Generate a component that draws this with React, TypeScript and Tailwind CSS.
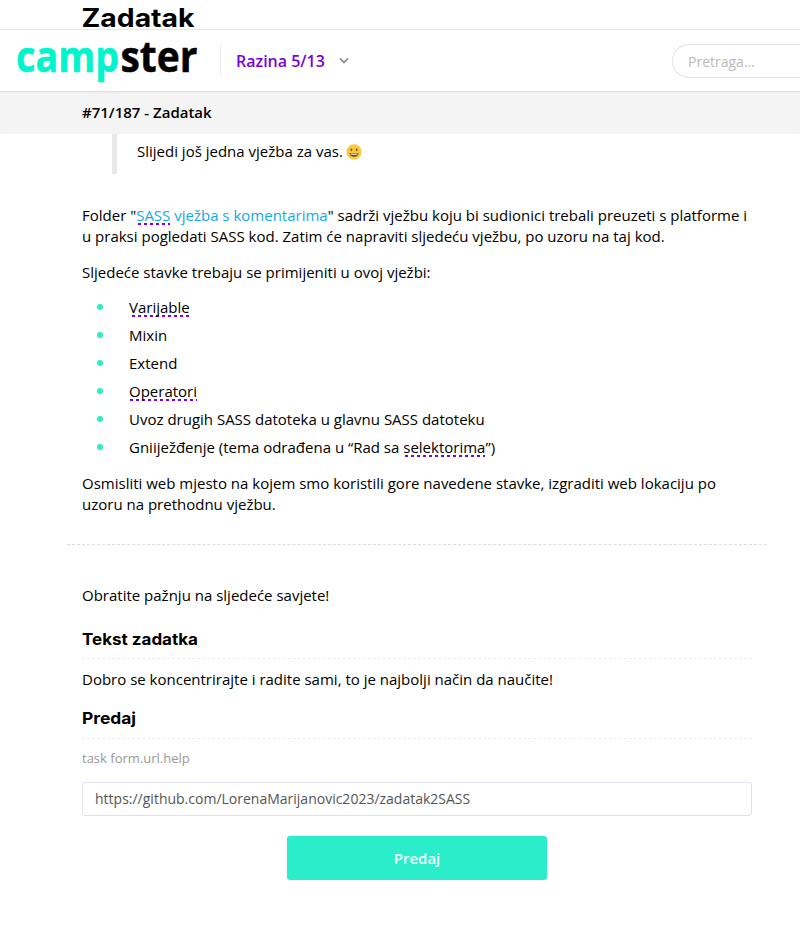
import type { ReactNode } from 'react';

const dash =
  'bg-[linear-gradient(90deg,#7a00df_3px,transparent_3px)] bg-[length:6px_2px] bg-repeat-x';

function Term({ children, phase }: { children: ReactNode; phase: string }) {
  return <span className={`${dash} ${phase}`}>{children}</span>;
}

function Smile() {
  return (
    <svg className="ml-[3px] inline-block size-4 align-[-3px]" viewBox="0 0 16 16">
      <circle cx="8" cy="7.8" r="7.6" fill="#fcc93e" />
      <ellipse cx="5.4" cy="5.8" rx="0.9" ry="1.4" fill="#6f5528" />
      <ellipse cx="10.6" cy="5.8" rx="0.9" ry="1.4" fill="#6f5528" />
      <path d="M3.4 8.8Q8 10.1 12.6 8.8Q12.1 12.8 8 12.8Q3.9 12.8 3.4 8.8Z" fill="#674a24" />
      <path d="M4.4 9.5Q8 10.4 11.6 9.5L11.2 10.5Q8 11.1 4.8 10.5Z" fill="#fff" />
    </svg>
  );
}

function Heading({ children, width }: { children: string; width: number }) {
  return (
    <h3 className="border-b border-dashed border-[#ececec]">
      <svg className="block h-6 w-[200px] overflow-visible" role="img">
        <text x="0" y="16" textLength={width} lengthAdjust="spacingAndGlyphs" fontSize="16" fontWeight="700" fontFamily="Inter, sans-serif">{children}</text>
      </svg>
    </h3>
  );
}

const items: ReactNode[] = [
  <Term phase="bg-position-[3px_100%]">Varijable</Term>,
  'Mixin',
  'Extend',
  <Term phase="bg-position-[1px_100%]">Operatori</Term>,
  'Uvoz drugih SASS datoteka u glavnu SASS datoteku',
  <>Gniiježđenje (tema odrađena u “Rad sa <Term phase="bg-position-[2px_100%]">selektorima</Term>”)</>,
];

export default function App() {
  return (
    <div className="h-[931px] overflow-hidden bg-white font-['Open_Sans',sans-serif] text-[15px] leading-[21px] text-black">
      <div className="h-[30px] border-b border-[#eeeeee] pl-[82px]">
        <svg className="block h-[29px] w-[140px] overflow-visible">
          <text x="-0.5" y="27" textLength="113" lengthAdjust="spacingAndGlyphs" fontSize="25" fontWeight="700" fontFamily="Inter, sans-serif">Zadatak</text>
        </svg>
      </div>
      <header className="flex h-[61px] items-center shadow-[0_1px_3px_rgba(0,0,0,0.14)]">
        <svg className="h-[61px] w-[220px] shrink-0 overflow-visible" viewBox="0 0 220 61" strokeWidth="0.5" strokeLinejoin="round">
          <text x="16" y="42" textLength="103" lengthAdjust="spacingAndGlyphs" fontSize="43" fontWeight="700" fontFamily="'Open Sans', sans-serif" fill="#00f5cd" stroke="#00f5cd">camp</text>
          <text x="120.5" y="42" textLength="77" lengthAdjust="spacingAndGlyphs" fontSize="43" fontWeight="700" fontFamily="'Open Sans', sans-serif" fill="#000" stroke="#000">ster</text>
        </svg>
        <div className="mb-px h-[30px] w-px bg-[#eeeeee]" />
        <span className="ml-[15px] text-base font-semibold text-[#7a00df]">Razina 5/13</span>
        <svg className="ml-[14px] h-2 w-[10px]" viewBox="0 0 10 8" fill="none" stroke="#888" strokeWidth="1.7">
          <path d="M1 1.5L5 5.5L9 1.5" />
        </svg>
        <div className="ml-auto flex h-[34px] w-32 items-center rounded-l-full border border-r-0 border-[#e3e3e3] pl-[15px] text-sm text-[#b9b9b9]"><span className="mt-[2px]">Pretraga...</span></div>
      </header>
      <div className="h-[43px] bg-[#f4f4f4] pt-[11px] pl-[82px] font-semibold shadow-[inset_0_2px_2px_-1px_rgba(0,0,0,0.1)]">#71/187 - Zadatak</div>
      <main className="ml-[82px] w-[670px]">
        <blockquote className="ml-[30px] h-10 border-l-5 border-[#e8e8e8] pt-[7px] pl-5">
          Slijedi još jedna vježba za vas.<Smile />
        </blockquote>
        <p className="mt-[31px]">
          Folder "<span className="text-[#14aae6]"><Term phase="bg-position-[2px_100%]">SASS</Term> vježba s komentarima</span>" sadrži vježbu koju bi sudionici trebali preuzeti s platforme i u praksi pogledati SASS kod. Zatim će napraviti sljedeću vježbu, po uzoru na taj kod.
        </p>
        <p className="mt-[15px]">Sljedeće stavke trebaju se primijeniti u ovoj vježbi:</p>
        <ul className="mt-[11px]">
          {items.map((item, i) => (
            <li key={i} className="flex h-7 items-center pl-[15px]">
              <span className="mr-[26px] mb-[2px] size-[6px] rounded-full bg-[#29eec9]" />
              <span className="mb-[2px]">{item}</span>
            </li>
          ))}
        </ul>
        <p className="mt-[11px]">Osmisliti web mjesto na kojem smo koristili gore navedene stavke, izgraditi web lokaciju po uzoru na prethodnu vježbu.</p>
        <hr className="-mx-[15px] mt-[29px] border-dashed border-[#dddddd]" />
        <p className="mt-10">Obratite pažnju na sljedeće savjete!</p>
        <div className="mt-[23px] [&>h3]:h-[30px]"><Heading width={116}>Tekst zadatka</Heading></div>
        <p className="mt-[10px]">Dobro se koncentrirajte i radite sami, to je najbolji način da naučite!</p>
        <div className="mt-[18px] [&>h3]:h-[31px]"><Heading width={54}>Predaj</Heading></div>
        <p className="mt-[9px] text-[13px] text-[#999]">task form.url.help</p>
        <div className="mt-[13px] flex h-[34px] items-center rounded-[3px] border border-[#e0e0f0] px-3 text-sm text-[#555]">https://github.com/LorenaMarijanovic2023/zadatak2SASS</div>
        <button className="mx-auto mt-5 block h-11 w-[260px] rounded-[3px] bg-[#29eec9] text-[15px] font-semibold text-white">Predaj</button>
      </main>
    </div>
  );
}
